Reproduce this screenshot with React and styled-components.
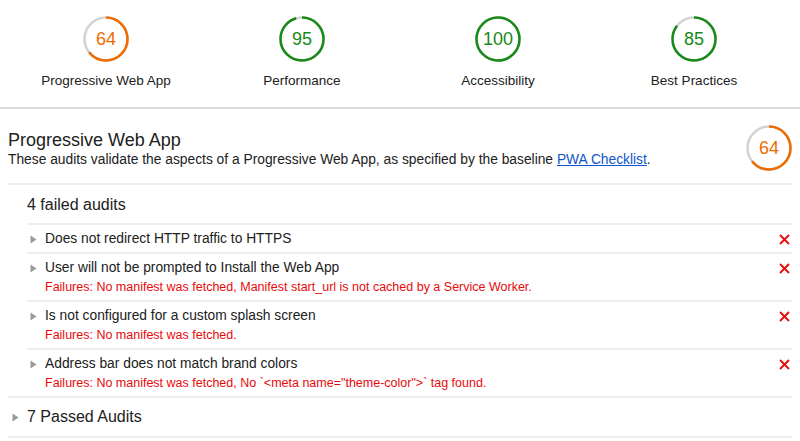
import React from 'react';
import styled, { createGlobalStyle } from 'styled-components';

const colors = {
  pass: '#178a17',
  average: '#ef6c00',
  fail: '#e8090b',
};

const scoreColor = (score) => (score >= 75 ? colors.pass : colors.average);

const categories = [
  { title: 'Progressive Web App', score: 64 },
  { title: 'Performance', score: 95 },
  { title: 'Accessibility', score: 100 },
  { title: 'Best Practices', score: 85 },
];

const failedAudits = [
  { title: 'Does not redirect HTTP traffic to HTTPS' },
  {
    title: 'User will not be prompted to Install the Web App',
    failure:
      'Failures: No manifest was fetched, Manifest start_url is not cached by a Service Worker.',
  },
  {
    title: 'Is not configured for a custom splash screen',
    failure: 'Failures: No manifest was fetched.',
  },
  {
    title: 'Address bar does not match brand colors',
    failure:
      'Failures: No manifest was fetched, No `<meta name="theme-color">` tag found.',
  },
];

const Gauge = ({ score }) => {
  const r = 21.5;
  const c = 2 * Math.PI * r;
  const color = scoreColor(score);
  return (
    <GaugeWrap $color={color}>
      <svg width='46' height='46' viewBox='0 0 46 46'>
        <circle cx='23' cy='23' r={r} fill='none' stroke='#d3d3d3' strokeWidth='2.5' />
        <circle
          cx='23'
          cy='23'
          r={r}
          fill='none'
          stroke={color}
          strokeWidth='2.5'
          strokeDasharray={`${(c * score) / 100} ${c}`}
          transform='rotate(-90 23 23)'
        />
      </svg>
      <GaugeValue>{score}</GaugeValue>
    </GaugeWrap>
  );
};

const Triangle = ({ left }) => (
  <Arrow $left={left}>
    <svg width='7' height='9' viewBox='0 0 7 9'>
      <path d='M0.5 0.5 L6.5 4.5 L0.5 8.5 Z' fill='#9a9a9a' />
    </svg>
  </Arrow>
);

const FailIcon = () => (
  <Cross>
    <svg width='11' height='11' viewBox='0 0 11 11'>
      <path d='M1 1 L10 10 M10 1 L1 10' stroke={colors.fail} strokeWidth='1.8' />
    </svg>
  </Cross>
);

const App = () => {
  return (
    <>
      <GlobalStyle />
      <ScoreBar>
        {categories.map((cat) => (
          <ScoreItem key={cat.title}>
            <Gauge score={cat.score} />
            <ScoreLabel>{cat.title}</ScoreLabel>
          </ScoreItem>
        ))}
      </ScoreBar>
      <Section>
        <SectionHeader>
          <div>
            <SectionTitle>Progressive Web App</SectionTitle>
            <SectionDesc>
              These audits validate the aspects of a Progressive Web App, as specified by the
              baseline <a href='#pwa'>PWA Checklist</a>.
            </SectionDesc>
          </div>
          <Gauge score={64} />
        </SectionHeader>
        <Group>
          <GroupTitle>4 failed audits</GroupTitle>
          {failedAudits.map((audit) => (
            <AuditRow key={audit.title}>
              <Triangle />
              <AuditBody>
                <AuditTitle>{audit.title}</AuditTitle>
                {audit.failure && <Failure>{audit.failure}</Failure>}
              </AuditBody>
              <FailIcon />
            </AuditRow>
          ))}
        </Group>
        <PassedGroup>
          <Triangle left />
          <PassedTitle>7 Passed Audits</PassedTitle>
        </PassedGroup>
      </Section>
    </>
  );
};

export default App;

const GlobalStyle = createGlobalStyle`
  body {
    margin: 0;
    background: #fff;
    font-family: "Liberation Sans", Arial, Helvetica, sans-serif;
    color: #212121;
  }
`;

const ScoreBar = styled.div`
  display: grid;
  grid-template-columns: repeat(4, 1fr);
  padding: 16px 8px 17px;
  border-bottom: 2px solid #dcdcdc;
`;

const ScoreItem = styled.div`
  display: flex;
  flex-direction: column;
  align-items: center;
  gap: 10px;
`;

const ScoreLabel = styled.div`
  font-size: 13.5px;
  line-height: 18px;
  color: #212121;
`;

const GaugeWrap = styled.div`
  position: relative;
  width: 46px;
  height: 46px;
  flex-shrink: 0;
  color: ${(p) => p.$color};
  > svg {
    display: block;
  }
`;

const GaugeValue = styled.span`
  position: absolute;
  inset: 0;
  display: flex;
  align-items: center;
  justify-content: center;
  font-size: 18px;
`;

const Section = styled.div`
  padding: 0 8px;
`;

const SectionHeader = styled.div`
  display: flex;
  align-items: center;
  justify-content: space-between;
  padding: 16px 0 12px;
  border-bottom: 2px solid #eeeeee;
`;

const SectionTitle = styled.div`
  font-size: 18px;
  line-height: 22px;
`;

const SectionDesc = styled.div`
  font-size: 13.8px;
  line-height: 17px;
  color: #212121;
  a {
    color: #1155cc;
  }
`;

const Group = styled.div`
  padding-left: 19px;
  border-bottom: 2px solid #eeeeee;
`;

const GroupTitle = styled.div`
  font-size: 16px;
  line-height: 20px;
  padding: 10px 0 8px;
`;

const AuditRow = styled.div`
  display: flex;
  align-items: flex-start;
  border-top: 2px solid #eeeeee;
  padding: 6px 0 5px;
`;

const Arrow = styled.span`
  display: flex;
  align-items: center;
  height: 16px;
  width: ${(p) => (p.$left ? '19px' : '18px')};
  padding-left: ${(p) => (p.$left ? '4px' : '3px')};
  box-sizing: border-box;
  flex-shrink: 0;
`;

const AuditBody = styled.div`
  flex: 1;
  display: flex;
  flex-direction: column;
  gap: 3px;
`;

const AuditTitle = styled.div`
  font-size: 13.8px;
  line-height: 16px;
`;

const Failure = styled.div`
  font-size: 12.5px;
  line-height: 16px;
  color: ${colors.fail};
`;

const Cross = styled.span`
  display: flex;
  align-items: center;
  justify-content: center;
  width: 16px;
  height: 16px;
`;

const PassedGroup = styled.div`
  display: flex;
  align-items: center;
  padding: 10px 0 10px;
  border-bottom: 2px solid #eeeeee;
`;

const PassedTitle = styled.div`
  font-size: 16px;
  line-height: 18px;
`;
